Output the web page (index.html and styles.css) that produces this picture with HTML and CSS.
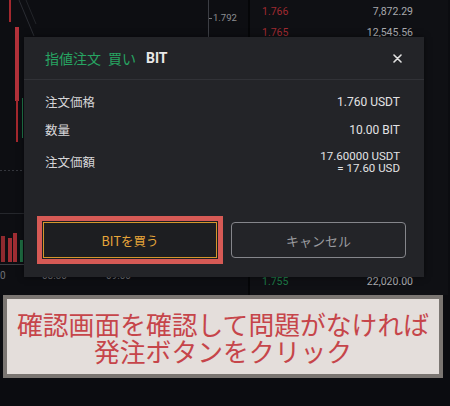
FILE: index.html
```html
<!DOCTYPE html>
<html lang="ja">
<head>
<meta charset="utf-8">
<link rel="stylesheet" href="styles.css">
</head>
<body>
<div class="screen">
  <div class="chart">
    <svg class="chart-svg" width="248" height="295" viewBox="0 0 248 295">
      <line x1="19" y1="0" x2="34" y2="36" stroke="#2b2d33" stroke-width="1"/>
      <line x1="26" y1="0" x2="36" y2="24" stroke="#23252a" stroke-width="1"/>
      <rect x="9" y="0" width="2" height="22" fill="#a3282e"/>
      <rect x="15" y="27" width="4" height="74" fill="#b2313a"/>
      <rect x="16" y="100" width="2" height="42" fill="#a3282e"/>
      <rect x="22" y="98" width="1" height="40" fill="#1f7a4a"/>
      <line x1="0" y1="170.5" x2="24" y2="170.5" stroke="#34363c" stroke-dasharray="2 2"/>
      <line x1="0" y1="213.5" x2="24" y2="213.5" stroke="#25272c"/>
      <rect x="1" y="236" width="4" height="26" fill="#8e2a2f"/>
      <rect x="8" y="238" width="4" height="24" fill="#a02d33"/>
      <rect x="13" y="233" width="4" height="29" fill="#a02d33"/>
      <rect x="20" y="240" width="3" height="22" fill="#1f6e43"/>
      <line x1="0" y1="264.5" x2="24" y2="264.5" stroke="#3a3c42"/>
      <line x1="208.5" y1="0" x2="208.5" y2="38" stroke="#3c3e44"/>
      <line x1="209" y1="18.5" x2="212" y2="18.5" stroke="#777"/>
    </svg>
    <span class="price-tag">1.792</span>
    <div class="axis">
      <span class="t0">0</span>
      <span class="t1">08:30</span>
      <span class="t2">09:00</span>
    </div>
  </div>
  <div class="book">
    <div class="book-row"><span class="ask">1.766</span><span class="amt">7,872.29</span></div>
    <div class="book-row"><span class="ask">1.765</span><span class="amt">12,545.56</span></div>
    <div class="book-gap"></div>
    <div class="book-row"><span class="bid">1.755</span><span class="amt">22,020.00</span></div>
  </div>

  <div class="modal">
    <div class="modal-head">
      <div class="title">
        <span class="green">指値注文</span>
        <span class="green">買い</span>
        <span class="coin">BIT</span>
      </div>
      <svg class="close" width="9" height="9" viewBox="0 0 9 9">
        <path d="M1 1 L8 8 M8 1 L1 8" stroke="#e2e2e2" stroke-width="1.6" stroke-linecap="round"/>
      </svg>
    </div>
    <div class="modal-body">
      <div class="row"><span class="label">注文価格</span><span class="value">1.760 USDT</span></div>
      <div class="row"><span class="label">数量</span><span class="value">10.00 BIT</span></div>
      <div class="row"><span class="label">注文価額</span><span class="value two"><span class="vline">17.60000 USDT</span><span class="vline">= 17.60 USD</span></span></div>
    </div>
    <div class="actions">
      <button class="btn buy">BITを買う</button>
      <button class="btn cancel">キャンセル</button>
    </div>
  </div>

  <div class="note">
    <p><span class="nline">確認画面を確認して問題がなければ</span><span class="nline">発注ボタンをクリック</span></p>
  </div>
</div>
</body>
</html>
```
FILE: styles.css
```css
html, body {
  margin: 0;
  padding: 0;
  background: #0b0c10;
}
body {
  font-family: Roboto, "Noto Sans CJK JP", sans-serif;
}
.screen {
  position: relative;
  width: 450px;
  height: 406px;
  overflow: hidden;
  display: flex;
  align-items: flex-start;
  background: #0b0c10;
}
.chart {
  position: relative;
  width: 248px;
  height: 295px;
  background: #0d0e12;
  flex: none;
}
.chart-svg {
  position: absolute;
  left: 0;
  top: 0;
}
.price-tag {
  position: absolute;
  left: 213px;
  top: 12px;
  font-size: 9.5px;
  color: #8d8e93;
}
.axis {
  position: absolute;
  left: 0;
  top: 270px;
  width: 248px;
  font-size: 10px;
  color: #6f7075;
}
.axis span {
  position: absolute;
  top: 0;
}
.axis .t0 { left: 0; }
.axis .t1 { left: 42px; }
.axis .t2 { left: 106px; }

.book {
  width: 200px;
  height: 295px;
  border-left: 2px solid #050608;
  background: #0f1014;
  padding: 4px 35px 0 12px;
  box-sizing: border-box;
  display: flex;
  flex-direction: column;
  flex: none;
}
.book-row {
  display: flex;
  justify-content: space-between;
  height: 21px;
  line-height: 16px;
  font-size: 10.5px;
}
.book-gap { height: 232px; }
.ask { color: #9f2a31; }
.bid { color: #1d7a47; }
.amt { color: #a9aaae; }

.modal {
  position: absolute;
  left: 24px;
  top: 37px;
  width: 400px;
  height: 240px;
  background: #232428;
  display: flex;
  flex-direction: column;
  box-shadow: 0 0 6px rgba(0,0,0,0.5);
}
.modal-head {
  height: 43px;
  padding: 0 22px 0 21px;
  border-bottom: 1px solid #313237;
  display: flex;
  align-items: center;
  justify-content: space-between;
  box-sizing: border-box;
}
.title {
  display: flex;
  align-items: center;
  gap: 7px;
  font-family: "Noto Sans CJK JP", sans-serif;
  font-size: 14px;
}
.green { color: #27a462; }
.coin {
  font-family: Roboto, sans-serif;
  font-weight: 700;
  color: #e8e8e8;
  margin-left: 3px;
}
.close { display: block; }
.modal-body {
  padding: 14px 24px 0 21px;
  display: flex;
  flex-direction: column;
  gap: 12px;
}
.row {
  display: flex;
  justify-content: space-between;
  align-items: center;
}
.label {
  font-family: "Noto Sans CJK JP", sans-serif;
  font-size: 12.5px;
  line-height: 16px;
  color: #d6d6d8;
}
.value {
  font-size: 12px;
  line-height: 16px;
  color: #e2e2e4;
  text-align: right;
}
.value.two {
  display: flex;
  flex-direction: column;
  align-items: flex-end;
  gap: 0;
}
.vline {
  display: block;
  font-size: 11.5px;
  line-height: 12px;
  height: 12px;
}
.actions {
  margin-top: auto;
  margin-bottom: 19px;
  padding: 0 18px 0 19px;
  display: flex;
  gap: 14px;
}
.btn {
  height: 36px;
  margin: 0;
  padding: 0;
  font-family: "Noto Sans CJK JP", sans-serif;
  box-sizing: border-box;
  cursor: pointer;
}
.buy {
  width: 174px;
  background: #1d1e21;
  border: 1px solid #d4962c;
  border-radius: 0;
  color: #e8a63a;
  font-size: 12.5px;
  box-shadow: 0 0 0 1px #1d1d20, 0 0 0 6px #d65a55;
}
.cancel {
  width: 175px;
  background: transparent;
  border: 1px solid #85868b;
  border-radius: 4px;
  color: #9a9b9f;
  font-size: 13px;
}

.note {
  position: absolute;
  left: 3px;
  top: 295px;
  width: 440px;
  height: 83px;
  box-sizing: border-box;
  border: 4px solid #7b7672;
  background: #e4dedb;
  display: flex;
  align-items: center;
  justify-content: center;
}
.note p {
  margin: 0;
  display: flex;
  flex-direction: column;
  align-items: center;
  font-family: "Noto Sans CJK JP", sans-serif;
  font-size: 25.8px;
  color: #c6454a;
}
.nline {
  display: block;
  height: 27px;
  line-height: 27px;
  white-space: nowrap;
}
```
